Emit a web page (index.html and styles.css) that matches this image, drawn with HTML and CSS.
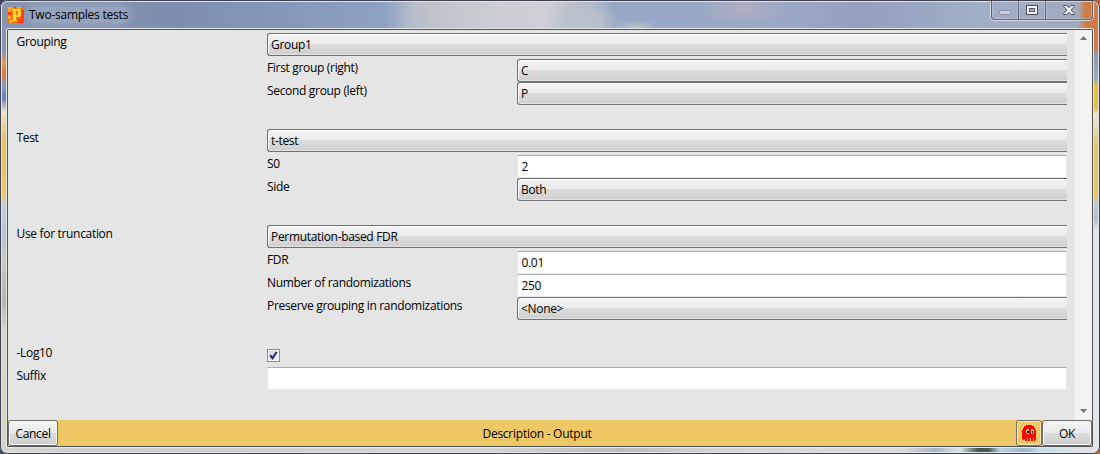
FILE: index.html
```html
<!DOCTYPE html>
<html lang="en">
<head>
<meta charset="utf-8">
<title>Two-samples tests</title>
<link rel="stylesheet" href="styles.css">
</head>
<body>
<div class="window">
  <header class="titlebar">
    <svg class="app-icon" width="16" height="16" viewBox="0 0 16 16" shape-rendering="crispEdges">
      <rect width="16" height="16" fill="#ff6a14"/>
      <path fill="#ffa52a" d="M0 0h5v2H3v3H0zM9 0h4v2H9zM0 8h3v4H0zM1 13h4v3H1z"/>
      <path fill="#ff3c08" d="M12 3h4v13h-6v-4h3V8h-1zM0 5h3v3H0zM5 0h3v1H5z"/>
      <path fill="#ffd62e" fill-rule="evenodd" d="M4 2h8v1h1v6h-1v1H8v3h1v1H4v-1h1V4H4zM8 4v4h2V4z"/>
    </svg>
    <h1 class="title">Two-samples tests</h1>
    <div class="caption">
      <span class="cap-btn cap-min"><svg width="12" height="5" viewBox="0 0 12 5"><rect x=".5" y=".5" width="11" height="4" rx="1" fill="#c9cedb" stroke="#8b92a8"/></svg></span>
      <span class="cap-btn cap-max"><svg width="12" height="10" viewBox="0 0 12 10"><path fill="#f5f5f5" stroke="#4b4e60" fill-rule="evenodd" d="M.5.5h11v9H.5zM3.500 3.500v3h5v-3z"/></svg></span>
      <span class="cap-btn cap-close"><svg width="12" height="10" viewBox="0 0 12 10"><path fill="#f5f5f5" stroke="#4b4e60" d="M.8.5h3L6 2.800 8.200.5h3v1L8 5l3.200 3.500v1h-3L6 7.200 3.800 9.500h-3v-1L4 5 .8 1.500z"/></svg></span>
    </div>
  </header>
  <main class="client">
    <div class="body">
      <form class="form">
        <section class="group">
          <label>Grouping</label>
          <div class="fields">
            <div class="select">Group1</div>
            <div class="sub">
              <label>First group (right)</label><div class="select">C</div>
              <label>Second group (left)</label><div class="select">P</div>
            </div>
          </div>
        </section>
        <section class="group">
          <label>Test</label>
          <div class="fields">
            <div class="select">t-test</div>
            <div class="sub">
              <label>S0</label><div class="input">2</div>
              <label>Side</label><div class="select">Both</div>
            </div>
          </div>
        </section>
        <section class="group">
          <label>Use for truncation</label>
          <div class="fields">
            <div class="select">Permutation-based FDR</div>
            <div class="sub">
              <label>FDR</label><div class="input">0.01</div>
              <label>Number of randomizations</label><div class="input">250</div>
              <label>Preserve grouping in randomizations</label><div class="select">&lt;None&gt;</div>
            </div>
          </div>
        </section>
        <section class="plain">
          <label>-Log10</label>
          <div class="check"><svg width="9" height="9" viewBox="0 0 9 9"><path d="M1.200 4.200 3.500 7.200 7.600 1" fill="none" stroke="#24247c" stroke-width="2"/></svg></div>
          <label>Suffix</label><div class="input"></div>
        </section>
      </form>
      <div class="scroll">
        <svg width="7" height="4" viewBox="0 0 7 4"><path d="M0 4 3.500 0 7 4z" fill="#777"/></svg>
        <svg width="7" height="4" viewBox="0 0 7 4"><path d="M0 0h7L3.500 4z" fill="#707070"/></svg>
      </div>
    </div>
    <footer class="bar">
      <div class="button cancel">Cancel</div>
      <div class="desc">Description - Output</div>
      <div class="button ghost"><svg width="14" height="16" viewBox="0 0 14 16" shape-rendering="crispEdges"><path fill="#f00" d="M4 0h6v1h2v2h1v2h1v10h-1v1h-1v-3h-1v3H9v-3H8v3H6v-3H5v3H3v-2H2v1H1v-1H0V5h1V3h1V1h2z"/><path fill="#f5d070" d="M4 5h1V4h2v5H5V8H4zM9 4h2v1h1v3h-1v1H9z"/><path d="M5 6h2v2H5zM10 6h1v2h-1z"/></svg></div>
      <div class="button ok">OK</div>
    </footer>
  </main>
</div>
</body>
</html>
```
FILE: styles.css
```css
* { box-sizing: border-box; }
body {
  margin: 0;
  font: 12px/16px "Open Sans", "Noto Sans", sans-serif;
  letter-spacing: -0.32px;
  color: #000;
  background: linear-gradient(90deg, #36415f, #404050 60%, #bd5b23);
}
.window {
  width: 1100px;
  height: 454px;
  padding: 0 6px 6px 6px;
  display: flex;
  flex-direction: column;
  border-radius: 7px;
  overflow: hidden;
  box-shadow: inset 0 0 0 1px #414350, inset 0 0 0 2px #dfe2ea;
  background:
    linear-gradient(180deg, #8795b1 0 52px, #e19b4d 62px, #d97845 76px, #8d9fc5 85px, #637eb8 98px, #e9e3c9 112px, #e5c15b 140px, #e8c868 195px, #c5d0da 205px, #b6c1d9 235px, #ccc9c0 260px, #b8b1ac 300px, #d8d6ca 330px, #d4d5c5 454px) 0 0 / 8px 454px no-repeat,
    linear-gradient(180deg, #d17a42 0 48px, #9198ad 55px, #a1a9bb 79px, #e5bf3f 86px 108px, #ece8dc 115px, #e5c462 145px 196px, #c0cbd9 204px, #b8bcc1 220px, #e5e5e5 230px 454px) 100% 0 / 8px 454px no-repeat,
    linear-gradient(90deg, #d7dacc, #ccc 90px, #d5d5d5 480px, #bdbdbd 620px, #d5d5d5 720px, #ddd 900px, #a8b8c0 935px, #dce6e8 960px, #465950 978px 988px, #b8d1dc 1000px, #9fb8c8 1026px, #c8e0e8 1040px, #e0e4e5 1090px) 0 100% / 100% 9px no-repeat,
    radial-gradient(ellipse 36px 26px at 584px 22px, #b9c1ca, #b9c1cacc 50%, #b9c1ca00),
    radial-gradient(ellipse 24px 9px at 636px 28px, #b9c3ca, #b9c3ca00),
    radial-gradient(ellipse 44px 18px at 742px 9px, #adb0c0, #adb0c000),
    linear-gradient(90deg, #8795b1, #7d8eae 180px, #8fa1c3 385px, #b4bdca 412px, #bfc3cb 435px, #cdced5 500px, #cfd0d7 545px, #c2c5cf 565px, #98a7c6 612px 650px, #9ba7c5 800px, #949fbd 860px, #a1afc7 980px, #a0a9bd 1078px, #d17a42 1086px);
}
.titlebar {
  height: 28px;
  flex: none;
  display: flex;
  align-items: flex-start;
  padding-left: 2px;
}
.app-icon { margin-top: 7px; flex: none; }
.title {
  margin: 7px 0 0 5px;
  font: inherit;
  letter-spacing: -0.25px;
  border-radius: 8px;
  background: #b8c3d560;
  box-shadow: 0 0 8px 3px #b8c3d560;
}
.caption {
  margin-left: auto;
  margin-top: 1px;
  display: flex;
  width: 104px;
  height: 20px;
  border: 1px solid #d8dde6;
  border-top: 0;
  border-radius: 0 0 5px 5px;
}
.cap-btn {
  border: solid #5b6276;
  border-width: 0 1px 1px 0;
  display: flex;
  align-items: center;
  justify-content: center;
  box-shadow: inset 0 0 0 1px #c7cddb88;
}
.cap-min { width: 28px; border-left-width: 1px; border-radius: 0 0 0 4px; padding-top: 4px; }
.cap-max { width: 27px; }
.cap-close { flex: 1; border-radius: 0 0 4px 0; }
.client {
  width: 1088px;
  height: 420px;
  border: 1px solid #e4e8e8;
  display: flex;
  flex-direction: column;
  border-radius: 2px;
  box-shadow: inset 0 0 0 1px #4f5355;
  padding: 1px;
}
.body {
  height: 390px;
  flex: none;
  display: flex;
  background: #e5e5e5;
}
.form { width: 1067px; flex: none; padding: 3px 8px 0; }
.group, .plain {
  display: grid;
  grid-template-columns: 251px 800px;
}
.group { margin-bottom: 24px; }
.group > label, .plain > label { padding-left: 0.5px; }
.fields { display: grid; row-gap: 3px; }
.sub { display: grid; grid-template-columns: 250px 550px; grid-auto-rows: 23px; }
.plain { grid-auto-rows: 23px; }
label { line-height: 17px; white-space: nowrap; }
.select {
  height: 23px;
  border: 1px solid #707070;
  border-right: 0;
  border-radius: 3px 0 0 3px;
  padding: 0 3px;
  line-height: 21px;
  background: linear-gradient(#f2f2f2, #ebebeb 48%, #dcdcdc 50%, #cfcfcf);
  box-shadow: inset 1px 1px #fcfcfc, inset 0 -1px #e4e4e4;
}
.input {
  height: 23px;
  background: #fff;
  border: 1px solid #e3e9ef;
  border-top-color: #abadb3;
  padding: 0 3px 0 3.5px;
  line-height: 21px;
}
.check {
  width: 13px;
  height: 13px;
  margin-top: 5px;
  border: 1px solid #8e8f8f;
  background: linear-gradient(135deg, #cbcfd5, #f7f7f7);
  box-shadow: inset 0 0 0 1px #f4f4f4;
  display: flex;
  align-items: center;
  justify-content: center;
}
.scroll {
  width: 17px;
  background: #f3f3f3;
  display: flex;
  flex-direction: column;
  align-items: center;
  justify-content: space-between;
  padding: 6px 0 7px;
}
.bar {
  height: 26px;
  flex: none;
  display: flex;
  background: #eec864;
}
.button {
  height: 26px;
  border: 1px solid #707070;
  border-radius: 3px;
  display: flex;
  align-items: center;
  justify-content: center;
  background: linear-gradient(#f3f3f3, #ebebeb 50%, #dddddd 51%, #cdcdcd);
  box-shadow: inset 0 0 0 1px #f8f8f8;
}
.cancel { width: 50px; padding-top: 1px; }
.desc { flex: 1; text-align: center; line-height: 28px; letter-spacing: -0.25px; }
.ghost { width: 26px; background: #eec864; box-shadow: inset 0 0 0 1px #f8e8b8; }
.ok { width: 50px; padding-top: 1px; }
```
